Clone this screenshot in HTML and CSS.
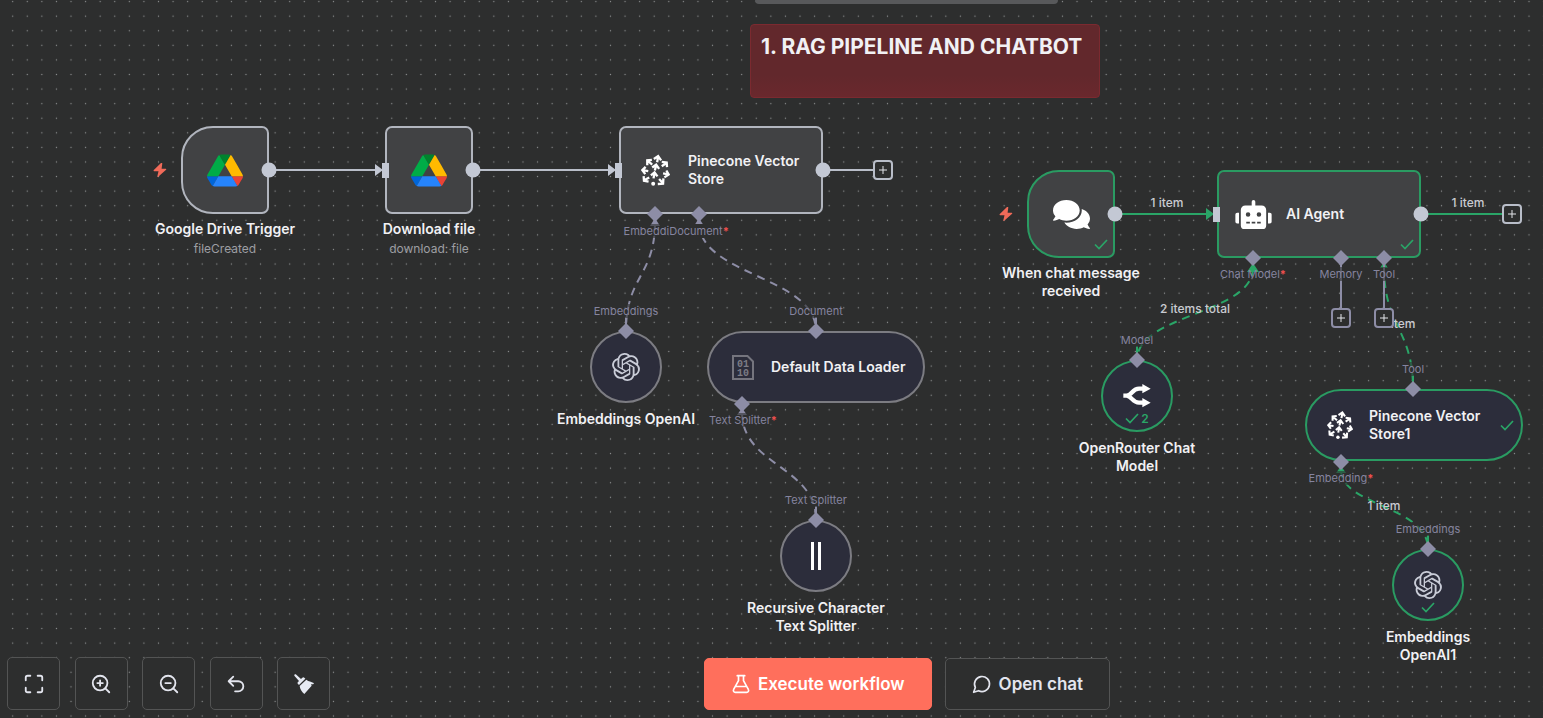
FILE: index.html
```html
<!DOCTYPE html>
<html lang="en">
<head>
<meta charset="utf-8">
<title>RAG pipeline and chatbot</title>
<link rel="stylesheet" href="styles.css">
</head>
<body>
<svg class="symbols" aria-hidden="true">
  <defs>
    <symbol id="drive" viewBox="0 0 87.3 78">
      <path fill="#0066da" d="m6.6 66.85 3.85 6.65c.8 1.4 1.95 2.5 3.3 3.3l13.75-23.8h-27.5c0 1.55.4 3.1 1.2 4.5z"/>
      <path fill="#00ac47" d="m43.65 25-13.75-23.8c-1.35.8-2.5 1.9-3.3 3.3l-25.4 44a9.06 9.06 0 0 0-1.2 4.5h27.5z"/>
      <path fill="#ea4335" d="m73.55 76.8c1.35-.8 2.5-1.9 3.3-3.3l1.6-2.75 7.65-13.25c.8-1.4 1.2-2.95 1.2-4.5h-27.502l5.852 11.5z"/>
      <path fill="#00832d" d="m43.65 25 13.75-23.8c-1.35-.8-2.9-1.2-4.5-1.2h-18.5c-1.6 0-3.15.45-4.5 1.2z"/>
      <path fill="#2684fc" d="m59.8 53h-32.3l-13.75 23.8c1.35.8 2.9 1.2 4.5 1.2h50.8c1.6 0 3.15-.45 4.5-1.2z"/>
      <path fill="#ffba00" d="m73.4 26.5-12.7-22c-.8-1.4-1.95-2.5-3.3-3.3l-13.75 23.8 16.15 28h27.45c0-1.55-.4-3.1-1.2-4.5z"/>
    </symbol>
    <symbol id="pinecone" viewBox="153 133 88 98">
      <g fill="none" stroke="#fff" stroke-width="7" stroke-linecap="butt">
        <path d="M191 206 194 190M183 197 194 188 203 200"/>
        <path d="M195 182 199 166M187 173 199 164 208 177"/>
        <path d="M202 157 205 140M192 147 205 138 214 151"/>
        <path d="M187 164 174 153M186 150 172 151 172 166"/>
        <path d="M175 184 158 181M167 171 157 181 166 193"/>
        <path d="M178 203 164 211M161 199 162 213 176 216"/>
        <path d="M216 169 229 160M216 156 231 158 232 172"/>
        <path d="M220 191 236 194M230 182 237 194 224 203"/>
        <path d="M208 208 219 220M221 206 220 222 204 223"/>
      </g>
      <circle cx="190" cy="222" r="6" fill="#fff"/>
    </symbol>
    <symbol id="openai" viewBox="0 0 24 24">
      <path fill="currentColor" d="M22.2819 9.8211a5.9847 5.9847 0 0 0-.5157-4.9108 6.0462 6.0462 0 0 0-6.5098-2.9A6.0651 6.0651 0 0 0 4.9807 4.1818a5.9847 5.9847 0 0 0-3.9977 2.9 6.0462 6.0462 0 0 0 .7427 7.0966 5.98 5.98 0 0 0 .511 4.9107 6.051 6.051 0 0 0 6.5146 2.9001A5.9847 5.9847 0 0 0 13.2599 24a6.0557 6.0557 0 0 0 5.7718-4.2058 5.9894 5.9894 0 0 0 3.9977-2.9001 6.0557 6.0557 0 0 0-.7475-7.073zm-9.022 12.6081a4.4755 4.4755 0 0 1-2.8764-1.0408l.1419-.0804 4.7783-2.7582a.7948.7948 0 0 0 .3927-.6813v-6.7369l2.02 1.1686a.071.071 0 0 1 .038.052v5.5826a4.504 4.504 0 0 1-4.4945 4.4944zm-9.6607-4.1254a4.4708 4.4708 0 0 1-.5346-3.0137l.142.0852 4.783 2.7582a.7712.7712 0 0 0 .7806 0l5.8428-3.3685v2.3324a.0804.0804 0 0 1-.0332.0615L9.74 19.9502a4.4992 4.4992 0 0 1-6.1408-1.6464zM2.3408 7.8956a4.485 4.485 0 0 1 2.3655-1.9728V11.6a.7664.7664 0 0 0 .3879.6765l5.8144 3.3543-2.0201 1.1685a.0757.0757 0 0 1-.071 0l-4.8303-2.7865A4.504 4.504 0 0 1 2.3408 7.872zm16.5963 3.8558L13.1038 8.364 15.1192 7.2a.0757.0757 0 0 1 .071 0l4.8303 2.7913a4.4944 4.4944 0 0 1-.6765 8.1042v-5.6772a.79.79 0 0 0-.407-.667zm2.0107-3.0231l-.142-.0852-4.7735-2.7818a.7759.7759 0 0 0-.7854 0L9.409 9.2297V6.8974a.0662.0662 0 0 1 .0284-.0615l4.8303-2.7866a4.4992 4.4992 0 0 1 6.6802 4.66zM8.3065 12.863l-2.02-1.1638a.0804.0804 0 0 1-.038-.0567V6.0742a4.4992 4.4992 0 0 1 7.3757-3.4537l-.142.0805L8.704 5.459a.7948.7948 0 0 0-.3927.6813zm1.0976-2.3654l2.602-1.4998 2.6069 1.4998v2.9994l-2.5974 1.4997-2.6067-1.4997Z"/>
    </symbol>
    <symbol id="check" viewBox="0 0 14 11">
      <path fill="none" stroke="#2aa567" stroke-width="1.7" d="m1 5.5 4 4L13 1"/>
    </symbol>
    <symbol id="bolt" viewBox="0 0 14 14">
      <path fill="#f06a59" d="M8 0 .8 7c-.5.6-.2 1.200.4 1.200h4.300L4.300 13.400c-.1.6.5.8.9.4L13.100 6.800c.4-.4.2-1.100-.4-1.100H8.600L9.300.6C9.400 0 8.500-.4 8 0z"/>
    </symbol>
    <pattern id="dots" width="20" height="20" patternUnits="userSpaceOnUse" patternTransform="translate(5.400 -5.700) scale(.729)">
      <circle cx="10" cy="10" r=".9" fill="#8f9192"/>
    </pattern>
  </defs>
</svg>

<main class="canvas">
  <svg class="layer" aria-hidden="true">
    <rect width="100%" height="100%" fill="url(#dots)"/>
    <g class="edge">
      <path d="M269 170H378M473 170H611M823 170H873"/>
      <path class="tip" d="M375 164 383 170 375 176ZM608 164 616 170 608 176Z"/>
    </g>
    <g class="edge done">
      <path d="M1115 214H1210M1421 214H1502"/>
      <path class="tip" d="M1206 208 1214 214 1206 220Z"/>
    </g>
    <g class="edge sub">
      <path class="dashed" d="M655 222C655 276 626 276 626 331"/>
      <path class="dashed" d="M699 222C699 276 816 276 816 331"/>
      <path class="dashed" d="M742 412C742 466 816 466 816 520"/>
      <path d="M626 317V330M816 317V330M816 506V520"/>
      <path class="tip" d="M655 218 660 226H650ZM699 218 704 226H694ZM742 408 747 415H737Z"/>
    </g>
    <g class="edge done">
      <path class="dashed" d="M1253 268C1253 314 1137 314 1137 360"/>
      <path class="dashed" d="M1384 266C1384 328 1413 328 1413 389"/>
      <path class="dashed" d="M1341 470C1341 506 1428 506 1428 549"/>
      <path d="M1137 346V360M1413 375V389M1428 535V549"/>
      <path class="tip" d="M1253 263 1259 272H1247ZM1384 262 1388 268H1380ZM1341 466 1346 473H1336Z"/>
    </g>
  </svg>

  <div class="panel-edge"></div>
  <section class="sticky"><h2>1. RAG PIPELINE AND CHATBOT</h2></section>

  <article class="node trigger n-drive">
    <svg class="bolt"><use href="#bolt"/></svg>
    <div class="box"><svg class="i-drive"><use href="#drive"/></svg></div>
    <div class="caption"><strong>Google Drive Trigger</strong><small>fileCreated</small></div>
  </article>

  <article class="node n-download">
    <div class="box"><svg class="i-drive"><use href="#drive"/></svg></div>
    <div class="caption"><strong>Download file</strong><small>download: file</small></div>
  </article>

  <article class="node wide n-store">
    <div class="box"><svg class="i-pine"><use href="#pinecone"/></svg><strong>Pinecone Vector Store</strong></div>
  </article>

  <article class="node round n-embed">
    <div class="box"><svg class="i-openai"><use href="#openai"/></svg></div>
    <div class="caption"><strong>Embeddings OpenAI</strong></div>
  </article>

  <article class="node pill n-loader">
    <div class="box">
      <svg class="i-file" viewBox="0 0 22 25">
        <path fill="none" stroke="#75757e" stroke-width="2" d="M1 1H15.500L21 6.500V24H1Z"/>
        <g fill="#7c7c85"><text x="5" y="12">01</text><text x="5" y="21">10</text></g>
      </svg>
      <strong>Default Data Loader</strong>
    </div>
  </article>

  <article class="node round n-splitter">
    <div class="box"><svg class="i-bars" viewBox="0 0 12 28"><path fill="#fff" d="M1 0H4V28H1ZM8 0H11V28H8Z"/></svg></div>
    <div class="caption"><strong>Recursive Character Text Splitter</strong></div>
  </article>

  <article class="node trigger success n-chat">
    <svg class="bolt"><use href="#bolt"/></svg>
    <div class="box">
      <svg class="i-comments" viewBox="0 32 576 448"><path fill="#fff" d="M416 192c0-88.4-93.1-160-208-160S0 103.6 0 192c0 34.3 14.1 65.9 38 92-13.4 30.2-35.5 54.2-35.8 54.5-2.2 2.3-2.8 5.7-1.500 8.700S4.800 352 8 352c36.600 0 66.900-12.300 88.700-25 32.200 15.700 70.300 25 111.300 25 114.900 0 208-71.600 208-160zm122 220c23.900-26 38-57.700 38-92 0-66.900-53.500-124.200-129.300-148.100.9 6.600 1.300 13.300 1.300 20.100 0 105.900-107.700 192-240 192-10.800 0-21.300-.8-31.700-1.900C207.800 439.600 281.800 480 368 480c41 0 79.100-9.200 111.300-25 21.800 12.700 52.100 25 88.700 25 3.200 0 6.100-1.900 7.300-4.800 1.300-2.900.7-6.300-1.500-8.700-.3-.2-22.400-24.200-35.800-54.500z"/></svg>
      <svg class="status"><use href="#check"/></svg>
    </div>
    <div class="caption"><strong>When chat message received</strong></div>
  </article>

  <article class="node wide success n-agent">
    <div class="box">
      <svg class="i-robot" viewBox="0 0 640 512"><path fill="#fff" d="M32,224H64V416H32A32,32,0,0,1,0,384V256A32,32,0,0,1,32,224Zm512-48V448a64,64,0,0,1-64,64H160a64,64,0,0,1-64-64V176a80,80,0,0,1,80-80H288V32a32,32,0,0,1,64,0V96H464A80,80,0,0,1,544,176ZM264,256a40,40,0,1,0-40,40A40,40,0,0,0,264,256Zm-8,128H192v32h64Zm96,0H288v32h64ZM456,256a40,40,0,1,0-40,40A40,40,0,0,0,456,256Zm-8,128H384v32h64ZM640,256V384a32,32,0,0,1-32,32H576V224h32A32,32,0,0,1,640,256Z"/></svg>
      <strong>AI Agent</strong>
      <svg class="status"><use href="#check"/></svg>
    </div>
  </article>

  <article class="node round success n-router">
    <div class="box">
      <svg class="i-router" viewBox="189 374 82 72">
        <path fill="none" stroke="#fff" stroke-width="13" d="M189 409H198C214 409 216 388 236 388H248M198 409C214 409 216 430 236 430H248"/>
        <path fill="#fff" d="M246 374 271 388 246 402ZM246 416 271 430 246 444Z"/>
      </svg>
      <div class="status"><svg><use href="#check"/></svg><span>2</span></div>
    </div>
    <div class="caption"><strong>OpenRouter Chat Model</strong></div>
  </article>

  <article class="node pill success n-store1">
    <div class="box"><svg class="i-pine"><use href="#pinecone"/></svg><strong>Pinecone Vector Store1</strong><svg class="status"><use href="#check"/></svg></div>
  </article>

  <article class="node round success n-embed1">
    <div class="box"><svg class="i-openai"><use href="#openai"/></svg><svg class="status"><use href="#check"/></svg></div>
    <div class="caption"><strong>Embeddings OpenAI1</strong></div>
  </article>

  <svg class="layer" aria-hidden="true">
    <g fill="#c3c8d4">
      <circle cx="269" cy="170" r="7.500"/><circle cx="473" cy="170" r="7.500"/><circle cx="823" cy="170" r="7.500"/>
      <circle cx="1115" cy="214" r="7.500"/><circle cx="1421" cy="214" r="7.500"/>
      <path d="M382 163h7v15h-7zM615 163h7v15h-7zM1213 207h7v15h-7z"/>
    </g>
    <path fill="#8d8da6" d="M655 206l8 8-8 8-8-8zM699 206l8 8-8 8-8-8zM626 323l8 8-8 8-8-8zM816 323l8 8-8 8-8-8zM742 396l8 8-8 8-8-8zM816 512l8 8-8 8-8-8zM1253 250l8 8-8 8-8-8zM1341 250l8 8-8 8-8-8zM1384 250l8 8-8 8-8-8zM1137 352l8 8-8 8-8-8zM1413 381l8 8-8 8-8-8zM1341 454l8 8-8 8-8-8zM1428 541l8 8-8 8-8-8z"/>
    <path fill="none" stroke="#8d8da6" stroke-width="2" d="M1341 264V309M1384 264V309"/>
  </svg>

  <span class="port p1"><span>Embedding<b>*</b></span></span>
  <span class="port p2"><span>Document<b>*</b></span></span>
  <span class="port p3"><span>Embeddings</span></span>
  <span class="port p4"><span>Document</span></span>
  <span class="port p5"><span>Text Splitter<b>*</b></span></span>
  <span class="port p6"><span>Text Splitter</span></span>
  <span class="port p7"><span>Chat Model<b>*</b></span></span>
  <span class="port p8"><span>Memory</span></span>
  <span class="port p9"><span>Tool</span></span>
  <span class="port p10"><span>Model</span></span>
  <span class="port p11"><span>Tool</span></span>
  <span class="port p12"><span>Embedding<b>*</b></span></span>
  <span class="port p13"><span>Embeddings</span></span>

  <span class="count c1">1 item</span>
  <span class="count c2">1 item</span>
  <span class="count c3">2 items total</span>
  <span class="count c4">1 item</span>
  <span class="count c5">1 item</span>

  <button class="add a1" aria-label="Add node"><svg viewBox="0 0 8 8"><path d="M4 0V8M0 4H8"/></svg></button>
  <button class="add a2" aria-label="Add node"><svg viewBox="0 0 8 8"><path d="M4 0V8M0 4H8"/></svg></button>
  <button class="add muted a3" aria-label="Add memory"><svg viewBox="0 0 8 8"><path d="M4 0V8M0 4H8"/></svg></button>
  <button class="add muted a4" aria-label="Add tool"><svg viewBox="0 0 8 8"><path d="M4 0V8M0 4H8"/></svg></button>
</main>

<footer class="bar">
  <div class="controls">
    <button aria-label="Fit to view"><svg viewBox="0 0 24 24"><path d="M8 3H5a2 2 0 0 0-2 2v3M21 8V5a2 2 0 0 0-2-2h-3M3 16v3a2 2 0 0 0 2 2h3M16 21h3a2 2 0 0 0 2-2v-3"/></svg></button>
    <button aria-label="Zoom in"><svg viewBox="0 0 24 24"><circle cx="11" cy="11" r="8"/><path d="m21 21-4.300-4.300M11 8v6M8 11h6"/></svg></button>
    <button aria-label="Zoom out"><svg viewBox="0 0 24 24"><circle cx="11" cy="11" r="8"/><path d="m21 21-4.300-4.300M8 11h6"/></svg></button>
    <button aria-label="Undo"><svg viewBox="0 0 24 24"><path d="M9 14 4 9l5-5M4 9h10.500a5.500 5.500 0 0 1 0 11H11"/></svg></button>
    <button aria-label="Tidy up"><svg class="broom" viewBox="0 0 60 60"><path d="M1 5C0 1 4-1 7 2L21 15 25 11C27 9 29 9 31 11L34 14 15 33 12 30C10 28 10 26 12 24L15 21ZM37 17C44 23 52 22 59 27C60 29 59 31 57 31L51 31 53 35 31 60C23 53 18 45 17 36Z"/></svg></button>
  </div>
  <div class="actions">
    <button class="primary"><svg viewBox="0 0 24 24"><path d="M9 2v6L3.200 18.500A2.300 2.300 0 0 0 5.200 22h13.600a2.300 2.300 0 0 0 2-3.500L15 8V2M7.500 2h9M6.500 15h11"/></svg>Execute workflow</button>
    <button><svg viewBox="0 0 24 24"><path d="M7.900 20A9 9 0 1 0 4 16.100L2 22Z"/></svg>Open chat</button>
  </div>
</footer>
</body>
</html>
```

FILE: styles.css
```css
* { box-sizing: border-box; }
body {
  margin: 0;
  height: 100vh;
  overflow: hidden;
  background: #2d2e2e;
  color: #f1f1f4;
  font-family: Inter, "Liberation Sans", sans-serif;
  display: flex;
  flex-direction: column;
  justify-content: flex-end;
}
button { font: inherit; color: inherit; margin: 0; padding: 0; cursor: pointer; }
.symbols { position: absolute; width: 0; height: 0; }
.canvas { position: absolute; inset: 0; overflow: hidden; }
.layer { position: absolute; inset: 0; width: 100%; height: 100%; pointer-events: none; }

.edge { fill: none; stroke: #b9bec9; stroke-width: 2; }
.edge.sub { stroke: #8d8da6; }
.edge.done { stroke: #2aa567; }
.edge .dashed { stroke-dasharray: 8 6; }
.edge .tip { fill: #c3c8d4; stroke: none; }
.edge.sub .tip { fill: #8d8da6; }
.edge.done .tip { fill: #2aa567; }

.panel-edge {
  position: absolute; left: 755px; top: 0; width: 303px; height: 4px;
  background: #58595b; border-radius: 0 0 4px 4px;
}
.sticky {
  position: absolute; left: 750px; top: 24px; width: 350px; height: 74px;
  padding: 8px 10px;
  border: 1px solid #7b2a30; border-radius: 4px;
  background: linear-gradient(#62282c 70%, #6a282d);
}
.sticky h2 { margin: 0; font-size: 21px; line-height: 28px; font-weight: 700; white-space: nowrap; }

.node { position: absolute; width: 88px; }
.box {
  height: 88px;
  position: relative;
  display: flex; align-items: center; justify-content: center;
  background: #414244;
  border: 2px solid #b1b5be; border-radius: 7px;
}
.node strong { font-size: 14px; line-height: 18px; font-weight: 600; }
.node small { font-size: 12px; line-height: 16px; color: #9d9ea3; white-space: nowrap; }
.trigger .box { border-radius: 32px 7px 7px 32px; }
.wide { width: 204px; }
.wide .box, .pill .box { justify-content: flex-start; }
.round { width: 72px; }
.round .box, .pill .box { height: 72px; border-radius: 36px; background: #2c2d3b; border-color: #7c7c82; }
.pill { width: 218px; }
.node.success .box { border-color: #2a9b62; }
.caption {
  display: flex; flex-direction: column; align-items: center; gap: 3px;
  width: 160px; margin: 6px -36px 0; text-align: center;
}
.round .caption { margin: 7px 0 0 -44px; }
.bolt { position: absolute; left: -28px; top: 37px; width: 14px; height: 14px; }

.i-drive { width: 36px; height: 33px; }
.i-pine { width: 29px; height: 33px; flex: none; margin: 0 18px 0 20px; }
.pill .i-pine { width: 26px; height: 29px; margin: 0 16px 0 20px; }
.i-openai { width: 28px; height: 28px; color: #c9ccd7; }
.i-file { width: 22px; height: 25px; margin: 0 17px 0 23px; flex: none; }
.i-file text { font: bold 10px "Liberation Mono", monospace; }
.i-bars { width: 12px; height: 28px; }
.i-comments { width: 37px; height: 29px; }
.i-robot { width: 37px; height: 29px; margin: 0 14px 0 16px; }
.i-router { width: 28px; height: 24px; }
.status { position: absolute; right: 5px; bottom: 6px; width: 14px; height: 11px; }
.round .status { left: 0; right: 0; bottom: 6px; margin: auto; }
.pill .status { right: 7px; top: 0; bottom: 0; margin: auto; }
.n-router .status {
  width: auto; display: flex; justify-content: center; align-items: center; gap: 2px;
  color: #2aa567; font-size: 12px; font-weight: 600; line-height: 12px;
}
.n-router .status svg { width: 14px; height: 11px; }

.n-drive { left: 181px; top: 126px; }
.n-download { left: 385px; top: 126px; }
.n-store { left: 619px; top: 126px; }
.n-embed { left: 590px; top: 331px; }
.n-loader { left: 707px; top: 331px; }
.n-splitter { left: 780px; top: 520px; }
.n-chat { left: 1027px; top: 170px; }
.n-agent { left: 1217px; top: 170px; }
.n-router { left: 1101px; top: 360px; }
.n-store1 { left: 1305px; top: 389px; }
.n-embed1 { left: 1392px; top: 549px; }
.n-embed1 .caption { width: 100px; margin-left: -14px; }
.n-router .caption { width: 130px; margin-left: -29px; }

/* zero-width anchors keep labels centred on their port */
.port, .count { position: absolute; width: 0; display: flex; justify-content: center; white-space: nowrap; }
.port { font-size: 11px; line-height: 14px; color: #85849f; }
.port > span { background: rgba(45, 46, 46, .6); }
.port b { color: #f0504f; }
.count { font-size: 12px; line-height: 16px; font-weight: 500; color: #c9cbd1; }
.p1 { left: 656px; top: 224px; }
.p2 { left: 699px; top: 224px; }
.p2 > span { background: #2d2e2e; }
.p3 { left: 626px; top: 304px; }
.p4 { left: 816px; top: 304px; }
.p5 { left: 743px; top: 413px; }
.p6 { left: 816px; top: 493px; }
.p7 { left: 1253px; top: 267px; }
.p7 > span { background: none; }
.p8 { left: 1341px; top: 267px; }
.p9 { left: 1384px; top: 267px; }
.p10 { left: 1137px; top: 333px; }
.p11 { left: 1413px; top: 362px; }
.p12 { left: 1341px; top: 471px; }
.p13 { left: 1428px; top: 522px; }
.c1 { left: 1167px; top: 195px; }
.c2 { left: 1468px; top: 195px; }
.c3 { left: 1195px; top: 301px; }
.c4 { left: 1399px; top: 316px; }
.c5 { left: 1384px; top: 498px; }

.add {
  position: absolute; width: 20px; height: 20px;
  display: flex; align-items: center; justify-content: center;
  background: #2d2e2e; border: 2px solid #b9bec9; border-radius: 4px;
}
.add.muted { border-color: #8d8da6; }
.add svg { width: 8px; height: 8px; stroke: #e4e5ea; stroke-width: 1; }
.a1 { left: 873px; top: 160px; }
.a2 { left: 1502px; top: 204px; }
.a3 { left: 1331px; top: 308px; }
.a4 { left: 1374px; top: 308px; }

.bar { position: relative; display: flex; align-items: center; padding: 0 59px 8px 7px; }
.bar svg { fill: none; stroke: currentColor; stroke-width: 2; stroke-linecap: round; stroke-linejoin: round; }
.bar button {
  background: #2d2e2e; border: 1px solid #535454; border-radius: 5px; color: #e3e5ee;
  display: flex; align-items: center; justify-content: center;
}
.controls { display: flex; justify-content: space-between; width: 323px; }
.controls button { width: 53px; height: 53px; }
.controls svg { width: 22px; height: 22px; }
.controls .broom { width: 20px; height: 20px; fill: #e6eaf3; stroke: none; }
.actions { flex: 1; display: flex; justify-content: center; gap: 13px; }
.actions button { height: 52px; padding: 0 26px; gap: 7px; font-size: 17px; font-weight: 600; }
.actions svg { width: 20px; height: 20px; }
.bar .primary { background: #ff6f5c; border-color: #ff6f5c; color: #fff; }
```
